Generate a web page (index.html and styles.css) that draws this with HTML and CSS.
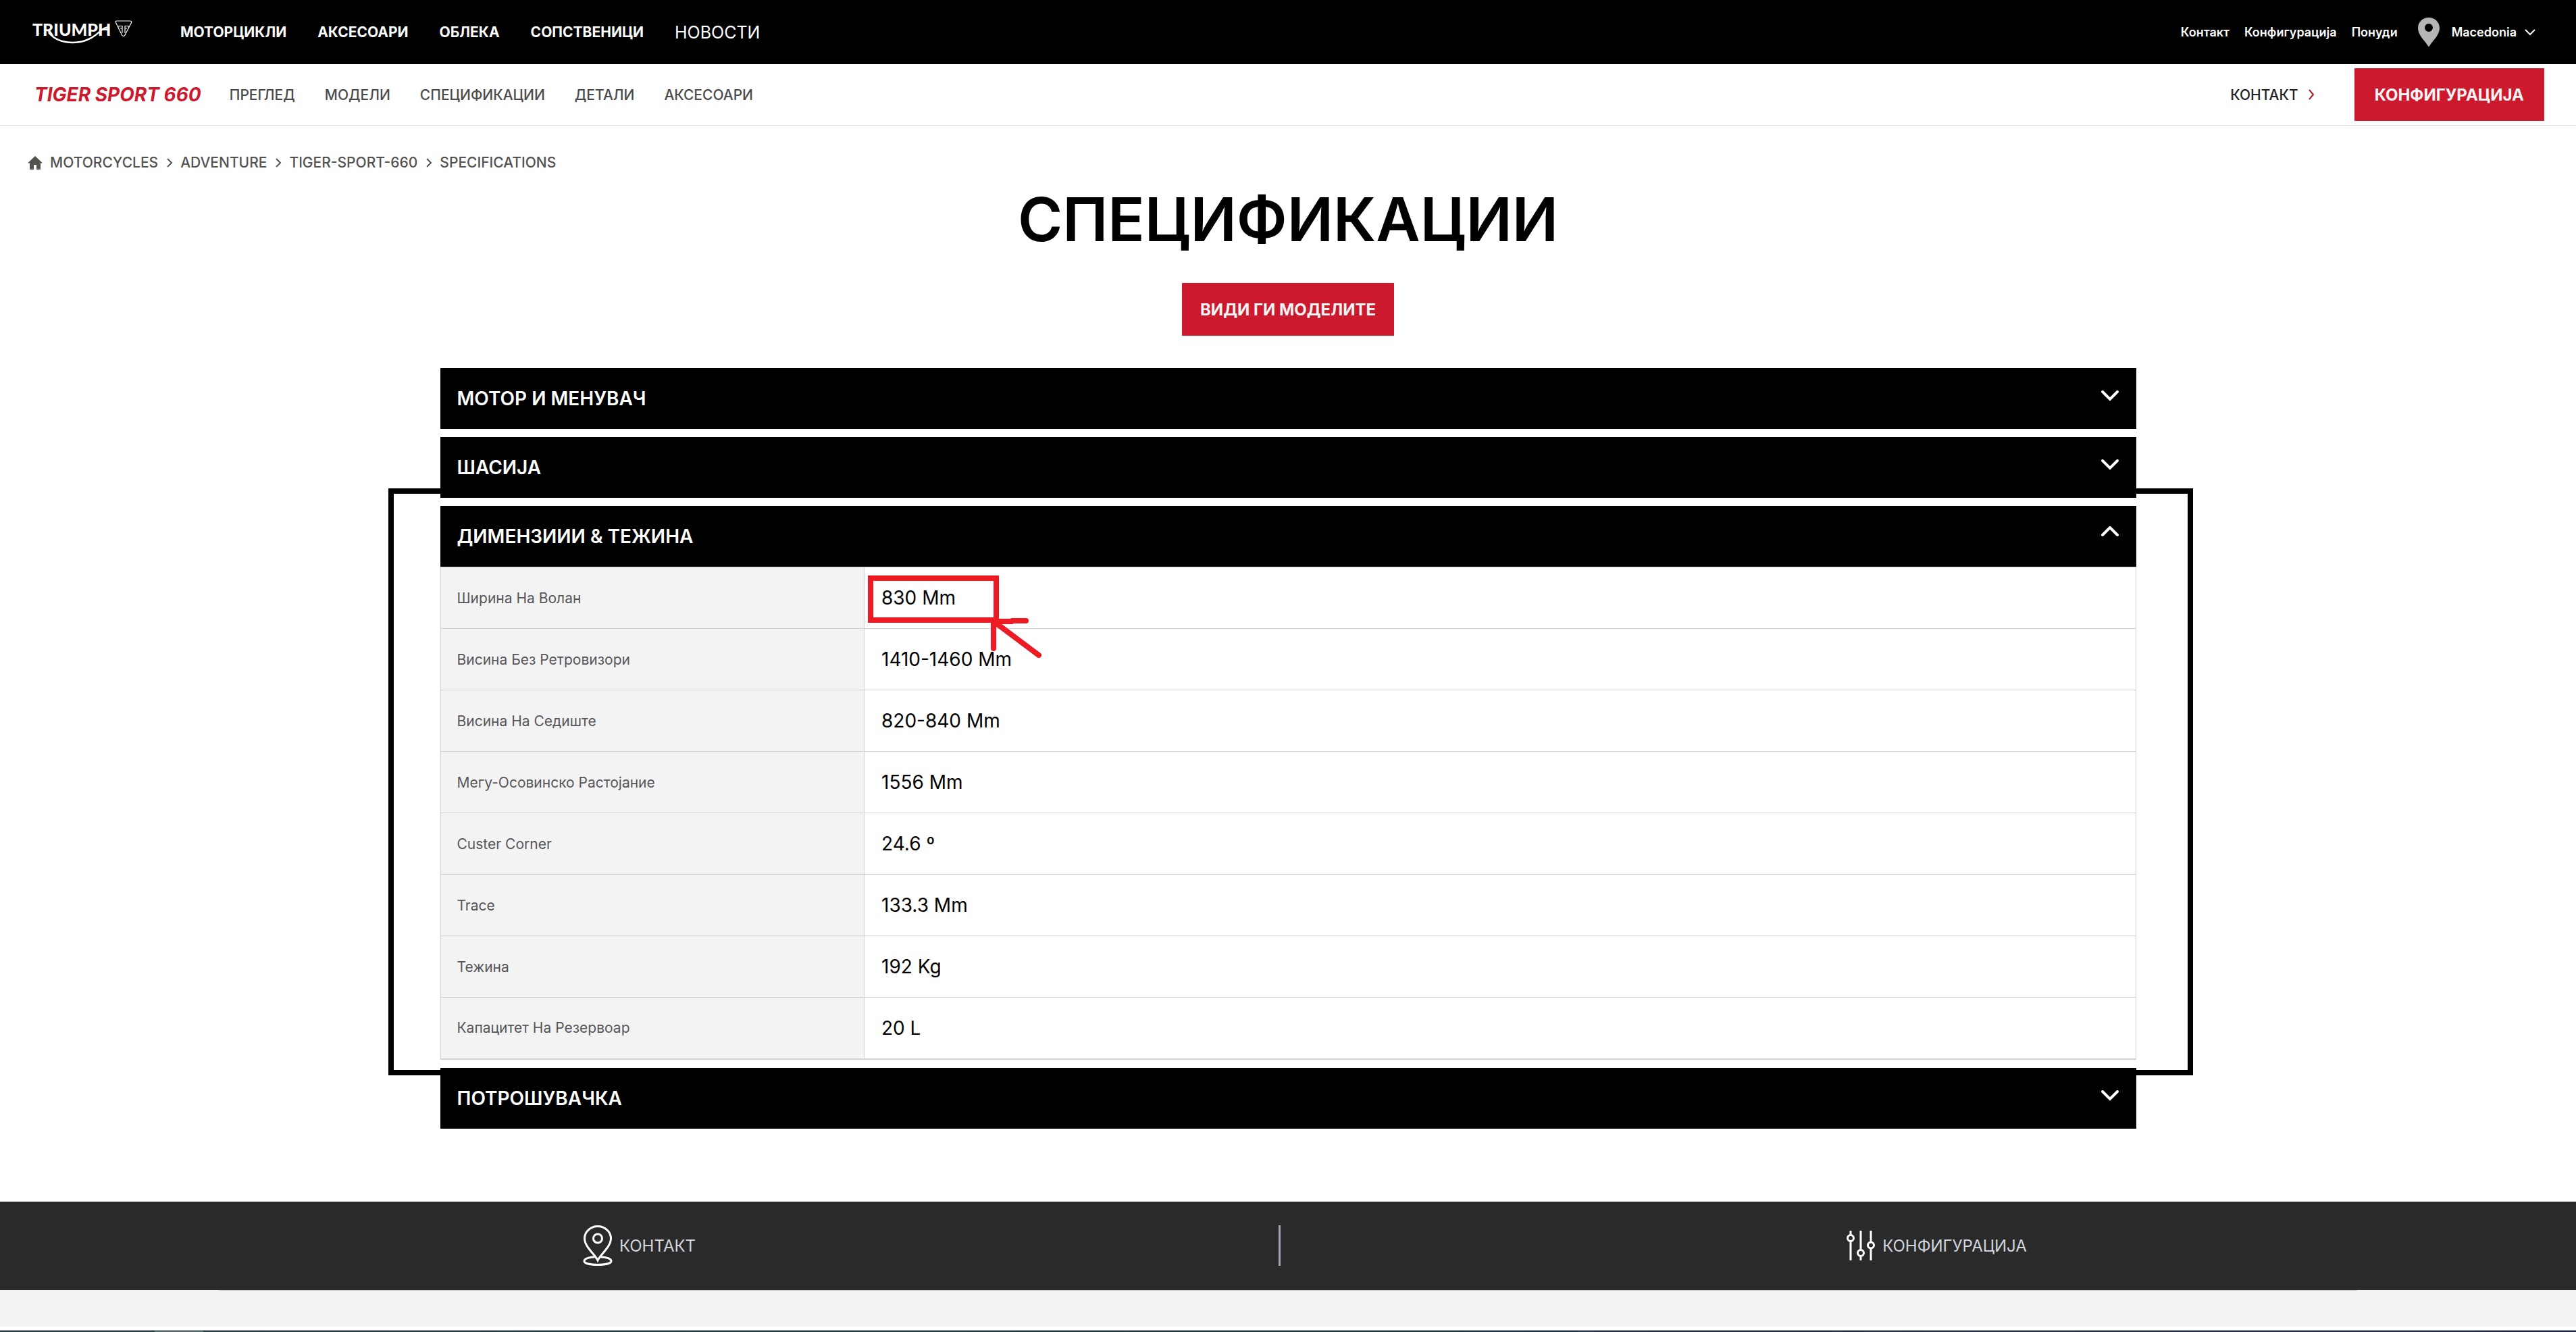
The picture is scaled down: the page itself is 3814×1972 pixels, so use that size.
FILE: index.html
```html
<!DOCTYPE html>
<html lang="mk">
<head>
<meta charset="utf-8">
<meta name="viewport" content="width=device-width, initial-scale=1">
<title>Tiger Sport 660 – Спецификации</title>
<link rel="stylesheet" href="styles.css">
</head>
<body>
<header class="topbar">
  <a class="logo" href="#" aria-label="Triumph">
    <svg width="150" height="56" viewBox="0 -10 150 56">
      <text class="logo-word" x="0" y="23">TRIUMPH</text>
      <path d="M24 18C32 28 44 33 60 33C82 33 94 22 103 14Q108 10 113 10.500" fill="none" stroke="#fff" stroke-width="2.500"/>
      <path d="M123.500 3.500Q122 1 125 1H144.500Q147.500 1 146.500 3.500L137 22Q134.500 25 132.500 22Z" fill="none" stroke="#fff" stroke-width="1.200"/>
      <path d="M128 10.500V8.500H133V19M130 12H133M142 10.500V8.500H137V19M137 12H140" fill="none" stroke="#fff" stroke-width="1.200"/>
    </svg>
  </a>
  <nav class="main-nav">
    <a href="#">МОТОРЦИКЛИ</a>
    <a href="#">АКСЕСОАРИ</a>
    <a href="#">ОБЛЕКА</a>
    <a href="#">СОПСТВЕНИЦИ</a>
    <a class="news" href="#">НОВОСТИ</a>
  </nav>
  <div class="utility">
    <a href="#">Контакт</a>
    <a href="#">Конфигурација</a>
    <a href="#">Понуди</a>
    <button class="region" type="button">
      <svg width="32" height="44" viewBox="0 0 32 44"><path fill="#b5b5b5" fill-rule="evenodd" d="M16 0C7 0 0 6.500 0 15.500C0 26 10 34 16 43.500C22 34 32 26 32 15.500C32 6.500 25 0 16 0ZM16 9a6 6 0 1 1 0 12a6 6 0 1 1 0-12Z"/></svg>
      <span>Macedonia</span>
      <svg class="region-arrow" width="16" height="10" viewBox="0 0 16 10"><path d="M1 1L8 8L15 1" fill="none" stroke="#fff" stroke-width="2"/></svg>
    </button>
  </div>
</header>

<div class="subbar">
  <a class="model" href="#">TIGER SPORT 660</a>
  <nav class="model-nav">
    <a href="#">ПРЕГЛЕД</a>
    <a href="#">МОДЕЛИ</a>
    <a href="#">СПЕЦИФИКАЦИИ</a>
    <a href="#">ДЕТАЛИ</a>
    <a href="#">АКСЕСОАРИ</a>
  </nav>
  <a class="contact" href="#">КОНТАКТ
    <svg width="9" height="16" viewBox="0 0 9 16"><path d="M1 1L7 8L1 15" fill="none" stroke="#a51c26" stroke-width="2"/></svg>
  </a>
  <button class="cta" type="button">КОНФИГУРАЦИЈА</button>
</div>

<main>
  <nav class="crumbs" aria-label="Breadcrumb">
    <svg width="22" height="20" viewBox="0 0 22 20"><path fill="#53524f" d="M11 0L22 10.500H19V19Q19 20 18 20H13V13H9V20H4Q3 20 3 19V10.500H0Z"/></svg>
    <a href="#">MOTORCYCLES</a>
    <svg class="sep" width="9" height="14" viewBox="0 0 9 14"><path d="M1 1L7 7L1 13"/></svg>
    <a href="#">ADVENTURE</a>
    <svg class="sep" width="9" height="14" viewBox="0 0 9 14"><path d="M1 1L7 7L1 13"/></svg>
    <a href="#">TIGER-SPORT-660</a>
    <svg class="sep" width="9" height="14" viewBox="0 0 9 14"><path d="M1 1L7 7L1 13"/></svg>
    <a href="#">SPECIFICATIONS</a>
  </nav>

  <div class="hero">
    <h1>СПЕЦИФИКАЦИИ</h1>
    <button class="cta" type="button">ВИДИ ГИ МОДЕЛИТЕ</button>
  </div>

  <div class="specs">
    <section>
      <button class="spec-head" type="button">МОТОР И МЕНУВАЧ
        <svg width="28" height="30" viewBox="0 0 28 30"><path d="M3 5L14 16L25 5"/></svg>
      </button>
    </section>
    <section>
      <button class="spec-head" type="button">ШАСИЈА
        <svg width="28" height="30" viewBox="0 0 28 30"><path d="M3 5L14 16L25 5"/></svg>
      </button>
    </section>
    <section class="open">
      <div class="mark-frame"></div>
      <button class="spec-head" type="button" aria-expanded="true">ДИМЕНЗИИИ &amp; ТЕЖИНА
        <svg width="28" height="30" viewBox="0 0 28 30"><path d="M3 13L14 2L25 13"/></svg>
      </button>
      <table>
        <tr><th scope="row">Ширина На Волан</th><td>830 Mm
          <svg class="mark-arrow" width="270" height="140" viewBox="0 0 270 140">
            <rect x="9" y="16" width="186" height="62"/>
            <path d="M195 80H218L219 79H239M191 80V120M194 82L258 130" stroke-linecap="round"/>
          </svg>
        </td></tr>
        <tr><th scope="row">Висина Без Ретровизори</th><td>1410-1460 Mm</td></tr>
        <tr><th scope="row">Висина На Седиште</th><td>820-840 Mm</td></tr>
        <tr><th scope="row">Мегу-Осовинско Растојание</th><td>1556 Mm</td></tr>
        <tr><th scope="row">Custer Corner</th><td>24.6 º</td></tr>
        <tr><th scope="row">Trace</th><td>133.3 Mm</td></tr>
        <tr><th scope="row">Тежина</th><td>192 Kg</td></tr>
        <tr><th scope="row">Капацитет На Резервоар</th><td>20 L</td></tr>
      </table>
    </section>
    <section>
      <button class="spec-head" type="button">ПОТРОШУВАЧКА
        <svg width="28" height="30" viewBox="0 0 28 30"><path d="M3 5L14 16L25 5"/></svg>
      </button>
    </section>
  </div>
</main>

<footer>
  <div class="actions">
    <a href="#">
      <svg width="44" height="60" viewBox="0 0 44 60" fill="none" stroke="#fff" stroke-width="3"><path d="M22 52C18 43 2.500 32 2.500 19.500A19.500 18 0 0 1 41.500 19.500C41.500 32 26 43 22 52Z"/><circle cx="22" cy="19.500" r="6.500"/><path d="M17.500 47C9 47 2 49.500 2 53C2 56.500 11 58.500 22 58.500S42 56.500 42 53C42 49.500 35 47 26.500 47"/></svg>
      КОНТАКТ
    </a>
    <span class="divider"></span>
    <a href="#">
      <svg width="44" height="46" viewBox="0 0 44 46" fill="none" stroke="#fff" stroke-width="3"><path d="M7 1V7M7 16V45M22 1V29M22 39V45M37 1V18M37 27V45"/><circle cx="7" cy="12" r="4.500"/><circle cx="22" cy="34" r="4.500"/><circle cx="37" cy="22.500" r="4.500"/></svg>
      КОНФИГУРАЦИЈА
    </a>
  </div>
  <div class="foot-strip"><div class="foot-line"></div></div>
  <div class="edge"></div>
  <div class="edge-dark"><div class="edge-thumb"></div></div>
</footer>
</body>
</html>
```
FILE: styles.css
```css
* {
  box-sizing: border-box;
}

body {
  display: flex;
  flex-direction: column;
  min-height: 100vh;
  margin: 0;
  background: #fff;
  color: #000;
  font-family: Inter, "Liberation Sans", sans-serif;
}

a {
  color: inherit;
  text-decoration: none;
}

button {
  border: 0;
  font-family: inherit;
}

svg {
  display: block;
  flex: none;
}

/* Top bar */
.topbar {
  display: flex;
  align-items: center;
  height: 95px;
  padding: 0 60px 0 48px;
  background: #000;
  color: #fff;
}

.logo-word {
  font-family: Lato, "Liberation Sans", sans-serif;
  font-size: 25px;
  font-weight: 900;
  fill: #fff;
}

.main-nav {
  display: flex;
  align-items: center;
  gap: 46px;
  margin-left: 69px;
  font-size: 21px;
  font-weight: 700;
}

.main-nav .news {
  font-size: 25px;
  font-weight: 400;
}

.utility {
  display: flex;
  align-items: center;
  gap: 22px;
  margin-left: auto;
  font-size: 18px;
  font-weight: 600;
}

.region {
  display: flex;
  align-items: center;
  gap: 18px;
  padding: 0 0 0 8px;
  background: none;
  color: #fff;
  font-size: 18px;
  font-weight: 600;
}

.region-arrow {
  margin-left: -6px;
}

/* Model bar */
.subbar {
  display: flex;
  align-items: center;
  height: 91px;
  padding: 0 47px 0 51px;
  border-bottom: 1px solid #d9d9dc;
  color: #4b4b4b;
  font-size: 21px;
  font-weight: 500;
}

.model {
  color: #cd192d;
  font-size: 28px;
  font-style: italic;
  font-weight: 700;
}

.model-nav {
  display: flex;
  gap: 44px;
  margin-left: 42px;
}

.contact {
  display: flex;
  align-items: center;
  gap: 15px;
  margin-left: auto;
  margin-right: 59px;
  color: #222;
}

.cta {
  height: 78px;
  padding: 0 30px;
  background: #cd192d;
  color: #f3f3f3;
  font-size: 24px;
  font-weight: 700;
}

/* Breadcrumb and title */
.crumbs {
  display: flex;
  align-items: center;
  gap: 11px;
  padding: 42px 41px 0;
  color: #53524f;
  font-size: 21px;
  font-weight: 500;
  line-height: 26px;
}

.sep {
  fill: none;
  stroke: #53524f;
  stroke-width: 2;
  margin-left: 2px;
}

.hero {
  display: flex;
  flex-direction: column;
  align-items: center;
  gap: 44px;
  margin-top: 21px;
}

.hero .cta {
  padding: 0 27px;
}

h1 {
  margin: 0;
  font-size: 90px;
  font-weight: 600;
  line-height: 100px;
}

/* Specification sections */
.specs {
  display: flex;
  flex-direction: column;
  gap: 12px;
  max-width: 2511px;
  margin: 48px auto 0;
  padding-bottom: 108px;
}

.spec-head {
  display: flex;
  align-items: center;
  justify-content: space-between;
  width: 100%;
  height: 90px;
  padding: 0 25px;
  background: #000;
  color: #fff;
  font-size: 28px;
  font-weight: 600;
}

.spec-head path {
  fill: none;
  stroke: #fff;
  stroke-width: 4;
  stroke-linecap: round;
}

.open {
  position: relative;
}

.mark-frame {
  position: absolute;
  inset: -26px -84px -23px -77px;
  border: 8px solid #000;
  pointer-events: none;
}

.open .spec-head {
  position: relative;
}

table {
  width: 100%;
  border-collapse: collapse;
  table-layout: fixed;
}

th,
td {
  height: 91px;
  padding: 0 24px;
  border: 1px solid #d1d1d6;
  text-align: left;
}

tr:last-child > * {
  border-bottom-width: 2px;
}

th {
  width: 25%;
  background: #f3f3f3;
  color: #56565a;
  font-size: 21px;
  font-weight: 400;
}

td {
  position: relative;
  padding-left: 25px;
  font-size: 28px;
  font-weight: 400;
}

.mark-arrow {
  position: absolute;
  top: 0;
  left: 0;
  z-index: 1;
  fill: none;
  stroke: #ed1c24;
  stroke-width: 8;
}

/* Footer */
footer {
  display: flex;
  flex: 1;
  flex-direction: column;
}

.actions {
  display: grid;
  grid-template-columns: 1893fr 3px 1918fr;
  align-items: center;
  height: 131px;
  background: #2a2a2a;
  color: #d1d5db;
  font-size: 24px;
}

.actions a {
  display: flex;
  align-items: center;
  justify-content: center;
  gap: 10px;
}

.actions a:last-child {
  padding-left: 24px;
}

.divider {
  height: 60px;
  background: #9ca3af;
}

.foot-strip {
  height: 54px;
  background: #f3f3f3;
}

.foot-line {
  width: 83%;
  height: 1px;
  margin: 0 auto;
  background: #d0d0d4;
}

.edge {
  height: 6px;
  border-bottom: 1px solid #a3a8aa;
}

.edge-dark {
  display: flex;
  flex: 1;
  min-height: 2px;
  padding-left: 6%;
  background: linear-gradient(90deg, #27404a, #253a44 50%, #1a2440);
}

.edge-thumb {
  width: 72px;
  background: #566a70;
}
```
